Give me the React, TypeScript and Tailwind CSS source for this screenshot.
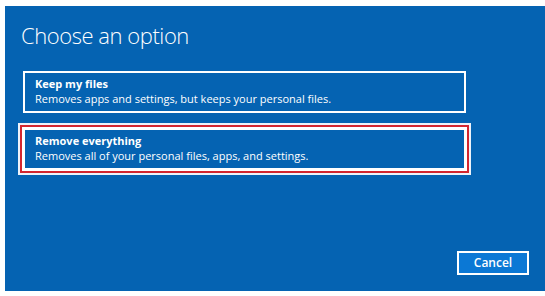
export default function App() {
  const font = { fontFamily: '"Open Sans", "Noto Sans", sans-serif' };
  return (
    <div className="w-[545px] h-[296px] bg-white overflow-hidden" style={font}>
      <div className="ml-[5px] mt-[6px] h-[285px] bg-[#0563b2] flex flex-col text-white">
        <h1 className="ml-[16px] mt-[15px] text-[22px] leading-[28px] font-light tracking-[-0.45px]">
          Choose an option
        </h1>
        <div className="ml-[18px] mt-[22px] w-[443px] flex flex-col gap-[15px]">
          <div className="h-[42px] border-2 border-white px-[10px] pt-[4px]">
            <div className="text-[11px] leading-[14px] font-bold">Keep my files</div>
            <div className="text-[11px] leading-[15px]">
              Removes apps and settings, but keeps your personal files.
            </div>
          </div>
          <div className="h-[42px] border-2 border-white px-[10px] pt-[4px] shadow-[0_0_0_1px_#ffffff,0_0_0_3px_#d3262f,0_0_0_5px_#eef3fa]">
            <div className="text-[11px] leading-[14px] font-bold">Remove everything</div>
            <div className="text-[11px] leading-[15px]">
              Removes all of your personal files, apps, and settings.
            </div>
          </div>
        </div>
        <div className="mt-auto mb-[16px] mr-[16px] flex justify-end">
          <button className="w-[72px] h-[24px] border-2 border-white bg-[#0b78d5] text-[12px] font-semibold leading-[20px] text-white">
            Cancel
          </button>
        </div>
      </div>
    </div>
  );
}
